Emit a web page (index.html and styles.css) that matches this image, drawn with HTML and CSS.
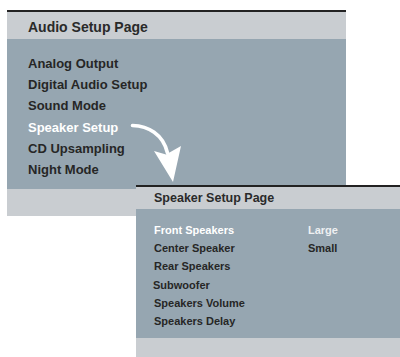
FILE: index.html
```html
<!DOCTYPE html>
<html>
<head>
<meta charset="utf-8">
<link rel="stylesheet" href="styles.css">
</head>
<body>
<div class="stage">
  <section class="panel main">
    <div class="head">Audio Setup Page</div>
    <ul class="items">
      <li>Analog Output</li>
      <li>Digital Audio Setup</li>
      <li>Sound Mode</li>
      <li class="sel">Speaker Setup</li>
      <li>CD Upsampling</li>
      <li>Night Mode</li>
    </ul>
    <div class="foot"></div>
  </section>

  <section class="panel sub">
    <div class="head">Speaker Setup Page</div>
    <div class="grid">
      <span class="sel">Front Speakers</span><span class="val">Large</span>
      <span>Center Speaker</span><span>Small</span>
      <span>Rear Speakers</span><span></span>
      <span class="nudge">Subwoofer</span><span></span>
      <span>Speakers Volume</span><span></span>
      <span>Speakers Delay</span><span></span>
    </div>
    <div class="foot"></div>
  </section>

  <svg class="arrow" width="400" height="357" viewBox="0 0 400 357">
    <path d="M132.5 125.5 C148 126 163 134 167.5 153" fill="none" stroke="#fff" stroke-width="3.6" stroke-linecap="round"/>
    <polygon points="154,151 166,154.5 181,146 173,182" fill="#fff"/>
  </svg>
</div>
</body>
</html>
```

FILE: styles.css
```css
html, body {
  margin: 0;
  padding: 0;
  background: #fff;
  overflow: hidden;
}

.stage {
  position: relative;
  width: 400px;
  height: 357px;
  padding: 10px 54px 0 7px;
  box-sizing: border-box;
  font-family: "Liberation Sans", Arial, sans-serif;
  font-weight: bold;
  color: #262626;
}

.panel {
  border-top: 2px solid #222;
  background: #c9cdd1;
}

.main .head {
  padding: 4px 0 0 21px;
  height: 23px;
  line-height: 22px;
  font-size: 14px;
  color: #2a2a2a;
}

.items {
  list-style: none;
  margin: 0;
  padding: 14px 0 9px 21px;
  background: #96a6b1;
  font-size: 13px;
  line-height: 21.2px;
}

.main .foot {
  height: 27px;
}

.sel {
  color: #fff;
}

.sub {
  position: absolute;
  left: 136px;
  top: 185px;
  right: 0;
}

.sub .head {
  padding-left: 18px;
  height: 22px;
  line-height: 22px;
  font-size: 12.5px;
  color: #2a2a2a;
}

.grid {
  display: grid;
  grid-template-columns: 154px auto;
  padding: 12px 0 8px 18px;
  background: #96a6b1;
  font-size: 11px;
  line-height: 18.2px;
}

.grid .val {
  color: #eef0f2;
}

.nudge {
  margin-left: -1px;
}

.sub .foot {
  height: 24px;
}

.arrow {
  position: absolute;
  left: 0;
  top: 0;
}
```
